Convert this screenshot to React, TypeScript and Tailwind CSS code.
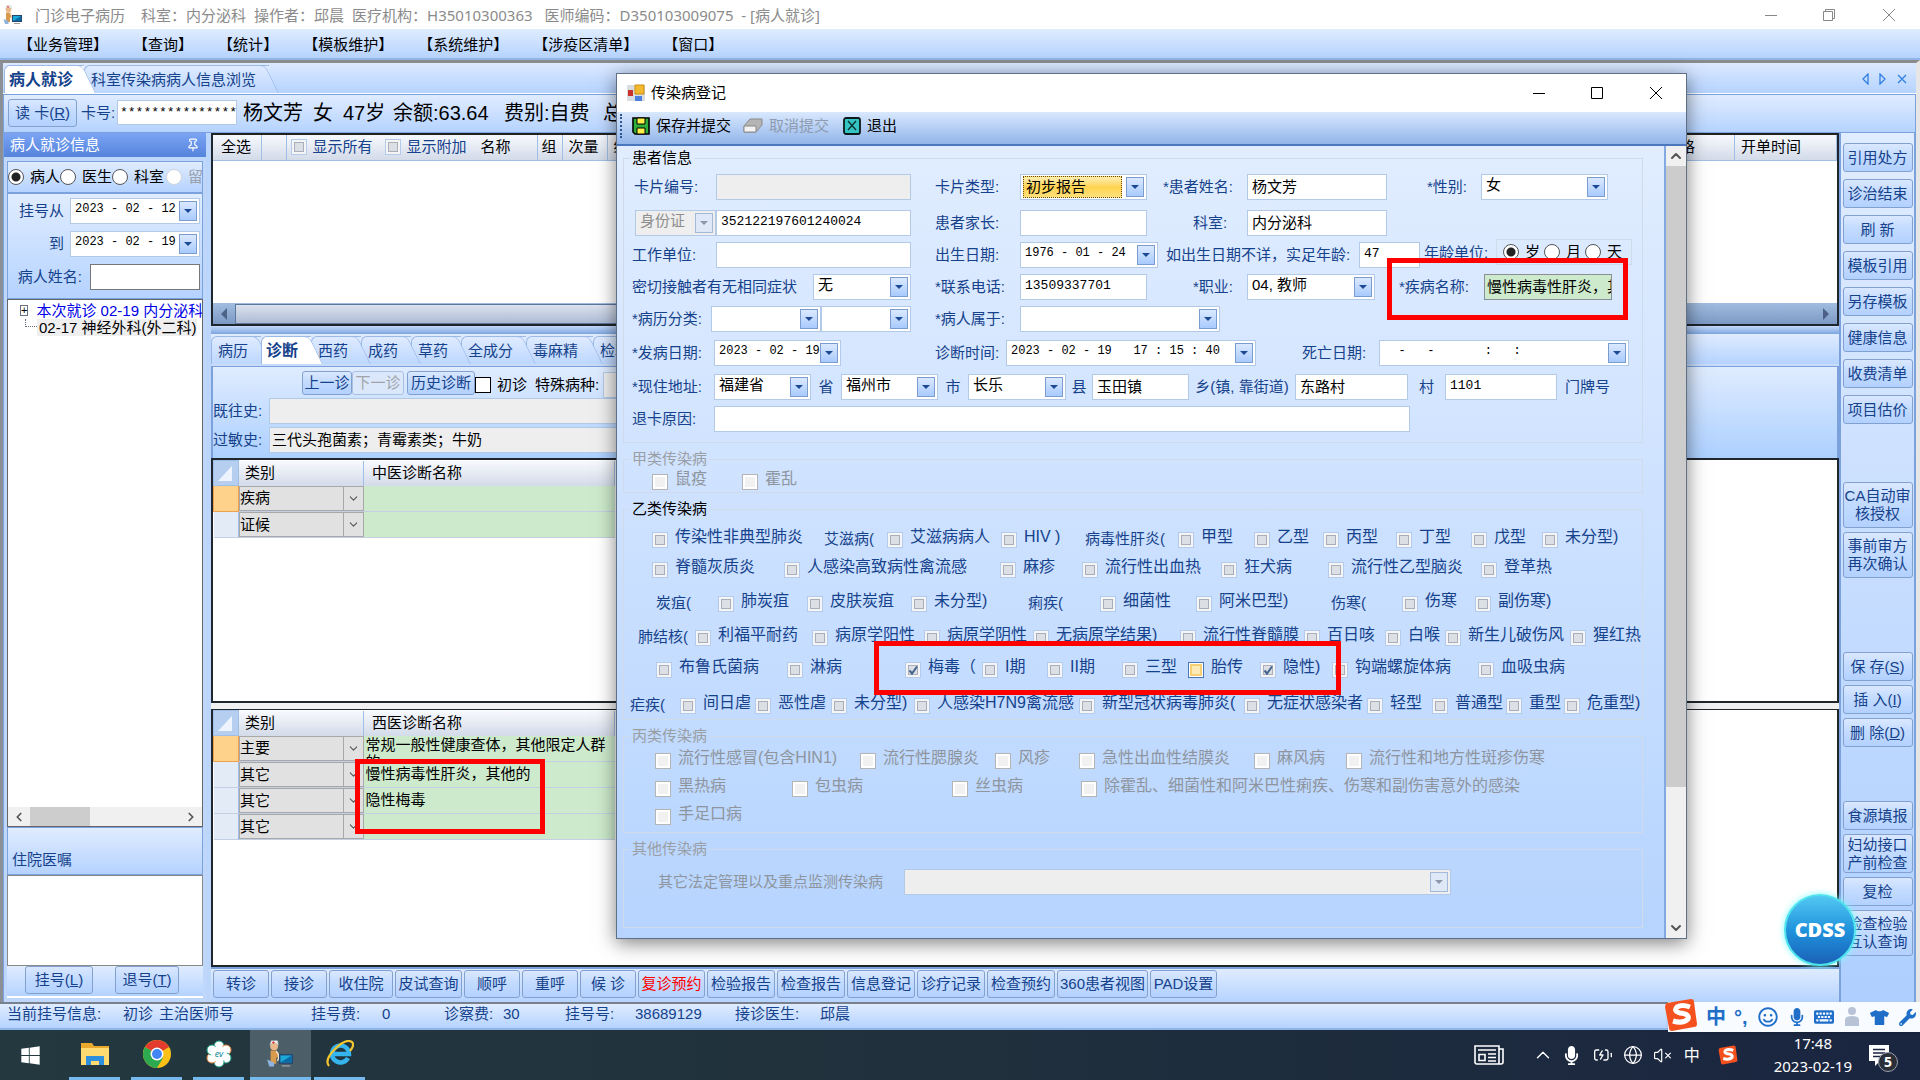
import { ReactNode, useState } from "react";
import { clsx } from "clsx";
import { FaKeyboard, FaMicrophone, FaRegSmile, FaTshirt, FaWindows, FaWrench } from "react-icons/fa";
import { BatteryCharging, ChevronDown, ChevronLeft, ChevronRight, ChevronUp, Globe, Pin, VolumeX } from "lucide-react";

const menus = ["业务管理", "查询", "统计", "模板维护", "系统维护", "涉疫区清单", "窗口"];

const visitTabs = [
  { name: "病历", width: "w-[50px]" },
  { name: "诊断", width: "w-[50px]" },
  { name: "西药", width: "w-[50px]" },
  { name: "成药", width: "w-[50px]" },
  { name: "草药", width: "w-[50px]" },
  { name: "全成分", width: "w-[65px]" },
  { name: "毒麻精", width: "w-[67px]" },
  { name: "检验", width: "w-[50px]" },
];

const bottomActions = [
  { name: "转诊", width: "w-14" },
  { name: "接诊", width: "w-14" },
  { name: "收住院", width: "w-16" },
  { name: "皮试查询", width: "w-[67px]" },
  { name: "顺呼", width: "w-14" },
  { name: "重呼", width: "w-14" },
  { name: "候 诊", width: "w-14" },
  { name: "复诊预约", width: "w-[67px]", red: true },
  { name: "检验报告", width: "w-[68px]" },
  { name: "检查报告", width: "w-[68px]" },
  { name: "信息登记", width: "w-[68px]" },
  { name: "诊疗记录", width: "w-[68px]" },
  { name: "检查预约", width: "w-[68px]" },
  { name: "360患者视图", width: "w-[91px]" },
  { name: "PAD设置", width: "w-[67px]" },
];

type Disease = { name: string; width: string; group?: boolean; checked?: boolean; focus?: boolean };

const classB: { row: string; items: Disease[] }[] = [
  {
    row: "pl-7",
    items: [
      { name: "传染性非典型肺炎", width: "w-[172px]" },
      { name: "艾滋病(", width: "w-[63px]", group: true },
      { name: "艾滋病病人", width: "w-[114px]" },
      { name: "HIV )", width: "w-[84px]" },
      { name: "病毒性肝炎(", width: "w-[93px]", group: true },
      { name: "甲型", width: "w-[76px]" },
      { name: "乙型", width: "w-[69px]" },
      { name: "丙型", width: "w-[73px]" },
      { name: "丁型", width: "w-[75px]" },
      { name: "戊型", width: "w-[71px]" },
      { name: "未分型)", width: "w-20" },
    ],
  },
  {
    row: "pl-7 mt-2.5",
    items: [
      { name: "脊髓灰质炎", width: "w-[132px]" },
      { name: "人感染高致病性禽流感", width: "w-[216px]" },
      { name: "麻疹", width: "w-[82px]" },
      { name: "流行性出血热", width: "w-[139px]" },
      { name: "狂犬病", width: "w-[107px]" },
      { name: "流行性乙型脑炎", width: "w-[153px]" },
      { name: "登革热", width: "w-20" },
    ],
  },
  {
    row: "pl-8 mt-3.5",
    items: [
      { name: "炭疽(", width: "w-[62px]", group: true },
      { name: "肺炭疽", width: "w-[89px]" },
      { name: "皮肤炭疽", width: "w-[104px]" },
      { name: "未分型)", width: "w-[117px]" },
      { name: "痢疾(", width: "w-[72px]", group: true },
      { name: "细菌性", width: "w-[96px]" },
      { name: "阿米巴型)", width: "w-[135px]" },
      { name: "伤寒(", width: "w-[71px]", group: true },
      { name: "伤寒", width: "w-[73px]" },
      { name: "副伤寒)", width: "w-20" },
    ],
  },
  {
    row: "pl-3.5 mt-3.5",
    items: [
      { name: "肺结核(", width: "w-[57px]", group: true },
      { name: "利福平耐药", width: "w-[117px]" },
      { name: "病原学阳性", width: "w-[112px]" },
      { name: "病原学阴性", width: "w-[109px]" },
      { name: "无病原学结果)", width: "w-[147px]" },
      { name: "流行性脊髓膜", width: "w-[124px]" },
      { name: "百日咳", width: "w-[81px]" },
      { name: "白喉", width: "w-[60px]" },
      { name: "新生儿破伤风", width: "w-[125px]" },
      { name: "猩红热", width: "w-[72px]" },
    ],
  },
  {
    row: "pl-8 mt-3",
    items: [
      { name: "布鲁氏菌病", width: "w-[131px]" },
      { name: "淋病", width: "w-[118px]" },
      { name: "梅毒（", width: "w-[77px]", checked: true },
      { name: "I期", width: "w-[65px]" },
      { name: "II期", width: "w-[75px]" },
      { name: "三型", width: "w-[66px]" },
      { name: "胎传", width: "w-[72px]", focus: true },
      { name: "隐性)", width: "w-[72px]", checked: true },
      { name: "钩端螺旋体病", width: "w-[146px]" },
      { name: "血吸虫病", width: "w-24" },
    ],
  },
  {
    row: "pl-1.5 mt-4",
    items: [
      { name: "疟疾(", width: "w-[50px]", group: true },
      { name: "间日虐", width: "w-[75px]" },
      { name: "恶性虐", width: "w-[76px]" },
      { name: "未分型)", width: "w-[83px]" },
      { name: "人感染H7N9禽流感", width: "w-[165px]" },
      { name: "新型冠状病毒肺炎(", width: "w-[165px]" },
      { name: "无症状感染者", width: "w-[123px]" },
      { name: "轻型", width: "w-[65px]" },
      { name: "普通型", width: "w-[74px]" },
      { name: "重型", width: "w-[58px]" },
      { name: "危重型)", width: "w-[78px]" },
    ],
  },
];

const classC: Disease[][] = [
  [
    { name: "流行性感冒(包含HIN1)", width: "w-[205px]" },
    { name: "流行性腮腺炎", width: "w-[135px]" },
    { name: "风疹", width: "w-[84px]" },
    { name: "急性出血性结膜炎", width: "w-[175px]" },
    { name: "麻风病", width: "w-[92px]" },
    { name: "流行性和地方性斑疹伤寒", width: "w-[210px]" },
  ],
  [
    { name: "黑热病", width: "w-[137px]" },
    { name: "包虫病", width: "w-40" },
    { name: "丝虫病", width: "w-[129px]" },
    { name: "除霍乱、细菌性和阿米巴性痢疾、伤寒和副伤害意外的感染", width: "w-[460px]" },
  ],
  [{ name: "手足口病", width: "w-24" }],
];

function Triangle({ muted }: { muted?: boolean }) {
  return (
    <svg width="8" height="4" viewBox="0 0 8 4">
      <path d="M0 0h8L4 4z" fill={muted ? "#8b97aa" : "#1c4a94"} />
    </svg>
  );
}

function DropMark({ muted }: { muted?: boolean }) {
  return (
    <span
      className={clsx(
        "pointer-events-none absolute top-[2px] right-[2px] flex h-5 w-[18px] items-center justify-center border",
        muted ? "border-[#a3b9da] bg-[#dfe8f6]" : "border-[#7a9cce] bg-linear-to-b from-[#dbe9ff] to-[#a9caff]"
      )}
    >
      <Triangle muted={muted} />
    </span>
  );
}

interface FieldProps {
  label: string;
  width: string;
  value?: string;
  disabled?: boolean;
  highlight?: boolean;
}

function Combo({ label, width, value = "", disabled, highlight }: FieldProps) {
  return (
    <span
      className={clsx(
        "relative flex h-[26px] shrink-0 border border-[#b3c9e8]",
        width,
        disabled ? "bg-[#eeeeee]" : "bg-white",
        highlight && "py-px pr-6 pl-0.5"
      )}
    >
      <select
        aria-label={label}
        disabled={disabled}
        defaultValue={value}
        className={clsx(
          "w-full appearance-none text-[15px] leading-5 outline-none",
          disabled ? "text-[#8d8d8d]" : "text-black",
          highlight
            ? "border border-dotted border-[#6b4a00] bg-linear-to-b from-[#ffefb0] via-[#ffd34e] to-[#ffe07a] pl-0.5"
            : "bg-transparent pb-1 pl-1"
        )}
      >
        <option>{value}</option>
      </select>
      <DropMark muted={disabled} />
    </span>
  );
}

function DateBox({ label, width, value = "" }: FieldProps) {
  return (
    <span className={clsx("relative flex h-[26px] shrink-0 border border-[#b3c9e8] bg-white", width)}>
      <input
        aria-label={label}
        defaultValue={value}
        className="w-full bg-transparent pb-1 pl-1 font-['Liberation_Mono',monospace] text-xs text-black outline-none"
      />
      <DropMark />
    </span>
  );
}

function TextBox({ label, width, value = "", disabled, highlight }: FieldProps) {
  const numeric = /^[\d*]+$/.test(value);
  return (
    <input
      aria-label={label}
      defaultValue={value}
      disabled={disabled}
      className={clsx(
        "h-[26px] shrink-0 border pb-1 text-black outline-none",
        width,
        numeric ? "font-['Liberation_Mono',monospace] text-[13px]" : "text-[15px]",
        disabled && "border-[#b3c9e8] bg-[#eeeeee]",
        highlight ? "border-[#8a8f96] bg-[#cdeacc] pl-0.5" : "pl-1",
        !disabled && !highlight && "border-[#b3c9e8] bg-white"
      )}
    />
  );
}

function Caption({ children, width }: { children: ReactNode; width: string }) {
  return <span className={clsx("shrink-0 whitespace-nowrap", width)}>{children}</span>;
}

function Radio({ name, label, checked, disabled }: { name: string; label: string; checked?: boolean; disabled?: boolean }) {
  return (
    <label className={clsx("flex shrink-0 items-center gap-1.5 whitespace-nowrap", disabled ? "text-gray-400" : "text-black")}>
      <input
        type="radio"
        name={name}
        defaultChecked={checked}
        disabled={disabled}
        className="size-4 appearance-none rounded-full border border-[#555] bg-white checked:bg-[radial-gradient(circle,#222_0_4px,#fff_5px)] disabled:border-gray-300"
      />
      {label}
    </label>
  );
}

function CheckItem({ item, disabled }: { item: Disease; disabled?: boolean }) {
  if (item.group) {
    return <span className={clsx("mt-0.5 shrink-0 text-[15px] leading-4 whitespace-nowrap", item.width)}>{item.name}</span>;
  }
  return (
    <label className={clsx("flex shrink-0 items-start gap-[7px] text-base leading-4 whitespace-nowrap", item.width)}>
      <span className="relative mt-[3px] size-4 shrink-0">
        <input
          type="checkbox"
          defaultChecked={item.checked}
          disabled={disabled}
          className={clsx(
            "peer block size-4 appearance-none border",
            disabled && "border-[#b5b5b5] bg-[#f1f1f1] shadow-[inset_0_0_0_2px_#fff]",
            !disabled && item.focus && "border-[#4a75b8] bg-[#fbe9b8] shadow-[inset_0_0_0_1px_#fff,inset_0_0_0_3px_#f6cf74]",
            !disabled && !item.focus && "border-[#b4cbec] bg-[#dcdfe4] shadow-[inset_0_0_0_2px_#f5f5f5,inset_0_0_0_3px_#a9afba]"
          )}
        />
        <svg viewBox="0 0 16 16" className="pointer-events-none absolute inset-0 hidden size-4 peer-checked:block">
          <path d="M4.5 8.5l2.5 3L12 4.5" fill="none" stroke="#44638f" strokeWidth="2" />
        </svg>
      </span>
      {item.name}
    </label>
  );
}

function Group({ title, muted, children }: { title: string; muted?: boolean; children: ReactNode }) {
  return (
    <fieldset className={clsx("border border-[#cfdaea]", muted ? "text-[#8e959e]" : "text-[#15428b]")}>
      <legend className={clsx("ml-1.5 px-0.5 leading-4", muted ? "text-[#9a9fa6]" : "text-black")}>{title}</legend>
      {children}
    </fieldset>
  );
}

function BlueButton({ children, className, disabled }: { children: ReactNode; className?: string; disabled?: boolean }) {
  return (
    <button
      disabled={disabled}
      className={clsx(
        "shrink-0 rounded-[3px] border text-[15px] whitespace-nowrap",
        disabled
          ? "border-[#a9c0e2] bg-[#dbe8fb] text-[#a0a4aa]"
          : "border-[#83a1cf] bg-linear-to-b from-[#dae8ff] via-[#c3dbff] via-45% to-[#b3d1ff]",
        className
      )}
    >
      {children}
    </button>
  );
}

function SlantTab({ name, active, width, onClick }: { name: string; active?: boolean; width: string; onClick?: () => void }) {
  return (
    <button
      role="tab"
      aria-selected={active}
      onClick={onClick}
      className={clsx(
        "relative h-full shrink-0 rounded-tl-md border-t border-l border-[#9bb9e6] text-left whitespace-nowrap",
        "after:absolute after:-top-px after:-right-[2px] after:bottom-0 after:w-4 after:origin-bottom-right after:skew-x-[26deg] after:rounded-tr-md after:border-t after:border-r after:border-[#9bb9e6]",
        active
          ? "z-10 bg-white pl-1 text-base font-bold after:z-0 after:translate-x-2.5 after:bg-white"
          : "bg-linear-to-b from-[#dfebff] to-[#bdd7ff] pl-1.5 text-[15px] after:z-10 after:translate-x-2 after:bg-linear-to-b after:from-[#dfebff] after:to-[#bdd7ff]",
        width
      )}
    >
      <span className="relative z-20">{name}</span>
    </button>
  );
}

function DiagnosisTable({ title, rows }: { title: string; rows: { kind: string; text: string }[] }) {
  return (
    <table className="table-fixed border-collapse text-black">
      <thead>
        <tr className="h-[25px] bg-linear-to-b from-[#f7f9fd] to-[#d3dbe9] text-left">
          <th className="w-[25px] border border-[#9fbfe6] bg-[#b6cff1]">
            <svg viewBox="0 0 22 22" className="size-[22px]">
              <path d="M18 4v15H4z" fill="#eef4fd" />
            </svg>
          </th>
          <th className="w-[125px] border-r border-[#9fbfe6] pl-1.5 font-normal">类别</th>
          <th className="w-[251px] border-r border-[#9fbfe6] pl-2 font-normal">{title}</th>
        </tr>
      </thead>
      <tbody>
        {rows.map((row, i) => (
          <tr key={i} className="h-[26px] border-b border-[#c3d0e2]">
            <td className={i === 0 ? "border border-[#f0a04b] bg-[#ffd28b]" : "border-r border-[#9fbfe6] bg-[#e3ebf7]"} />
            <td className="p-0">
              <span className="relative flex h-[25px] border border-[#a8a8a8] bg-[#e1e1e1]">
                <select aria-label="类别" defaultValue={row.kind} className="w-full appearance-none bg-transparent outline-none">
                  <option>{row.kind}</option>
                </select>
                <span className="pointer-events-none absolute top-0 right-0 flex h-full w-5 items-center justify-center border-l border-[#a8a8a8]">
                  <ChevronDown size={13} className="text-[#555]" />
                </span>
              </span>
            </td>
            <td className="bg-[#cdeacc] p-0 pl-0.5">
              <div className={clsx("h-[25px] overflow-hidden", i === 0 ? "leading-[17px]" : "leading-6")}>{row.text}</div>
            </td>
          </tr>
        ))}
      </tbody>
    </table>
  );
}

function AppIcon() {
  return (
    <svg viewBox="0 0 20 20" className="size-full">
      <circle cx="6.5" cy="4.500" r="2.800" fill="#e9b98d" />
      <path d="M3.500 3.500q3-3 6 0L9 .5H4.500z" fill="#f6f6f6" stroke="#b9b9b9" strokeWidth=".4" />
      <path d="M6 .8v2M5 1.800h2" stroke="#d33" strokeWidth=".6" />
      <path d="M4 7.500h4.500l1.500 4-2 1.500v4H4z" fill="#d99a4e" />
      <path d="M1.500 14l5 2v3H3z" fill="#8fb3dd" />
      <path d="M8 8q3 3 1 7" fill="none" stroke="#f4e3cf" />
      <rect x="10" y="10" width="10" height="7" fill="#23476e" />
      <path d="M11 11h8v5h-8z" fill="#1ba9d8" />
      <path d="M11 16l8-5v5z" fill="#0b6aa6" />
      <path d="M12 18h6v1h-6z" fill="#9a9a9a" />
    </svg>
  );
}

function SogouMark({ className }: { className?: string }) {
  return (
    <svg viewBox="0 0 34 34" className={className}>
      <path d="M3 5L27 1q3 0 3 3l3 22q0 3-3 3L8 33q-3 0-3-3L1 9q0-3 2-4z" fill="#f4511e" />
      <path d="M26 9q-8-3-13 0-4 4 3 6 10 1 8 6-5 5-15 2" fill="none" stroke="#fff" strokeWidth="5" />
    </svg>
  );
}

function Sidebar() {
  return (
    <aside className="mr-[5px] flex w-[203px] shrink-0 flex-col border-l border-[#7ba2dc] bg-[#bfd7fb]">
      <header className="flex h-6 items-center justify-between bg-linear-to-b from-[#7ba4f4] to-[#5584dc] px-1.5 text-white">
        病人就诊信息
        <Pin size={14} />
      </header>
      <div className="mx-[3px] mt-1 flex h-8 items-center overflow-hidden border border-[#7ba2dc] bg-linear-to-b from-[#e0ecff] to-[#b5d3ff]">
        <Radio name="scope" label="病人" checked />
        <Radio name="scope" label="医生" />
        <Radio name="scope" label="科室" />
        <span className="ml-0.5">
          <Radio name="scope" label="留观" disabled />
        </span>
      </div>
      <div className="mx-[3px] flex h-[106px] flex-col justify-center gap-[7px] border border-[#7ba2dc] bg-linear-to-b from-[#e0ecff] to-[#b5d3ff] pr-0.5 pb-1">
        <div className="flex items-center justify-end gap-1.5">
          挂号从
          <DateBox label="挂号从" width="w-[130px]" value="2023 - 02 - 12" />
        </div>
        <div className="flex items-center justify-end gap-1.5">
          到
          <DateBox label="到" width="w-[130px]" value="2023 - 02 - 19" />
        </div>
        <label className="flex items-center justify-end gap-2">
          病人姓名:
          <input className="h-[26px] w-[110px] border border-[#777] bg-white" />
        </label>
      </div>
      <div className="mx-[3px] flex flex-1 flex-col border border-[#666] bg-white">
        <ul className="overflow-hidden pt-0.5 leading-[17px] whitespace-nowrap text-black">
          <li className="flex items-center gap-1 pl-3 text-[#0000e6]">
            <span className="flex size-[11px] items-center justify-center border border-gray-500 text-[11px] leading-none text-black">+</span>
            <span className="w-1 border-t border-dotted border-gray-500" />
            本次就诊 02-19 内分泌科
          </li>
          <li className="flex pl-[17px]">
            <span className="h-2 w-3 border-b border-l border-dotted border-gray-500" />
            <span className="bg-[#efefef] pl-0.5">02-17 神经外科(外二科)</span>
          </li>
        </ul>
        <div className="mt-auto flex h-[19px] items-center justify-between bg-[#f0f0f0] px-1 text-[#555]">
          <ChevronLeft size={14} strokeWidth={3} />
          <span className="mr-auto ml-1 h-[19px] w-[60px] bg-[#cdcdcd]" />
          <ChevronRight size={14} strokeWidth={3} />
        </div>
      </div>
      <h2 className="mx-[3px] flex h-12 items-end border border-[#7ba2dc] bg-linear-to-b from-[#e0ecff] to-[#b5d3ff] pb-1 pl-1">住院医嘱</h2>
      <div className="mx-[3px] h-[91px] border border-[#888] bg-white" />
      <div className="mx-[3px] mb-1 flex h-8 items-center gap-[22px] border-b-2 border-white bg-linear-to-b from-[#e0ecff] to-[#b5d3ff] pb-0.5 pl-[18px]">
        <BlueButton className="h-7 w-[68px]">
          挂号(<u>L</u>)
        </BlueButton>
        <BlueButton className="h-7 w-[64px]">
          退号(<u>T</u>)
        </BlueButton>
      </div>
    </aside>
  );
}

function OrderGrid() {
  return (
    <section className="flex h-[193px] shrink-0 flex-col border-2 border-[#20262e] border-t-[#222] bg-white">
      <table className="w-full table-fixed border-collapse text-black">
        <thead>
          <tr className="h-[25px] bg-linear-to-b from-[#f7f9fd] to-[#d3dbe9] text-left [&>th]:border-r [&>th]:border-b [&>th]:border-[#9fbfe6] [&>th]:font-normal">
            <th className="w-12 pl-2">全选</th>
            <th className="w-[25px]" />
            <th className="w-[251px]">
              <span className="flex items-center pl-1 whitespace-nowrap">
                <label className="flex w-[94px] items-center gap-1.5 text-[#15428b]">
                  <input type="checkbox" className="size-4 appearance-none border border-[#b4cbec] bg-[#dcdfe4] shadow-[inset_0_0_0_2px_#f5f5f5,inset_0_0_0_3px_#a9afba]" />
                  显示所有
                </label>
                <label className="flex w-24 items-center gap-1.5 text-[#15428b]">
                  <input type="checkbox" className="size-4 appearance-none border border-[#b4cbec] bg-[#dcdfe4] shadow-[inset_0_0_0_2px_#f5f5f5,inset_0_0_0_3px_#a9afba]" />
                  显示附加
                </label>
                名称
              </span>
            </th>
            <th className="w-[25px] pl-1">组</th>
            <th className="w-[45px] pl-1.5">次量</th>
            <th className="pl-1.5">给药途径</th>
            <th className="w-[78px] pl-2">规格</th>
            <th className="w-[102px] pl-1.5">开单时间</th>
          </tr>
        </thead>
      </table>
      <div className="mt-auto flex h-[21px] items-center bg-linear-to-b from-[#a2bde0] to-[#7c99c4]">
        <svg width="22" height="12" viewBox="0 0 22 12">
          <path d="M14 0v12L8 6z" fill="#4d6488" />
        </svg>
        <span className="h-5 w-[900px] border border-[#5d789f] bg-linear-to-b from-[#dbe2ee] to-[#adbbd4]" />
        <svg width="22" height="12" viewBox="0 0 22 12" className="ml-auto">
          <path d="M8 0v12l6-6z" fill="#4d5f86" />
        </svg>
      </div>
    </section>
  );
}

function ActionRail() {
  const top = ["引用处方", "诊治结束", "刷 新", "模板引用", "另存模板", "健康信息", "收费清单", "项目估价"];
  return (
    <nav className="flex w-[77px] shrink-0 flex-col items-center border-x-2 border-[#7ba2dc] bg-linear-to-b from-[#e0ecff] to-[#aecfff] pt-2.5 leading-[18px]">
      <div className="flex flex-col gap-[7px]">
        {top.map((name) => (
          <BlueButton key={name} className="h-[29px] w-[70px]">
            {name}
          </BlueButton>
        ))}
      </div>
      <BlueButton className="mt-[58px] h-[46px] w-[70px]">
        CA自动审
        <br />
        核授权
      </BlueButton>
      <BlueButton className="mt-1 h-[46px] w-[70px]">
        事前审方
        <br />
        再次确认
      </BlueButton>
      <BlueButton className="mt-[74px] h-[29px] w-[70px]">
        保 存(<u>S</u>)
      </BlueButton>
      <BlueButton className="mt-1 h-[29px] w-[70px]">
        插 入(<u>I</u>)
      </BlueButton>
      <BlueButton className="mt-1 h-[29px] w-[70px]">
        删 除(<u>D</u>)
      </BlueButton>
      <BlueButton className="mt-[54px] h-[29px] w-[70px]">食源填报</BlueButton>
      <BlueButton className="mt-1 h-[39px] w-[70px]">
        妇幼接口
        <br />
        产前检查
      </BlueButton>
      <BlueButton className="mt-1 h-[29px] w-[70px]">复检</BlueButton>
      <BlueButton className="mt-1 h-[46px] w-[70px]">
        检查检验
        <br />
        互认查询
      </BlueButton>
    </nav>
  );
}

function PatientForm() {
  return (
    <div className="flex flex-col gap-1.5 pt-2 pb-2.5 pl-2 [&>div]:flex [&>div]:h-[26px] [&>div]:items-center">
      <div className="mb-1">
        <Caption width="w-[84px] pl-0.5">卡片编号:</Caption>
        <TextBox label="卡片编号" width="w-[195px]" disabled />
        <Caption width="w-[109px] pl-6">卡片类型:</Caption>
        <Combo label="卡片类型" width="w-[127px]" value="初步报告" highlight />
        <Caption width="w-[100px] pl-4">*患者姓名:</Caption>
        <TextBox label="患者姓名" width="w-[140px]" value="杨文芳" />
        <Caption width="w-[94px] pl-10">*性别:</Caption>
        <Combo label="性别" width="w-[127px]" value="女" />
      </div>
      <div>
        <span className="w-[3px]" />
        <Combo label="证件类型" width="w-[81px]" value="身份证" disabled />
        <TextBox label="证件号码" width="w-[195px]" value="352122197601240024" />
        <Caption width="w-[109px] pl-6">患者家长:</Caption>
        <TextBox label="患者家长" width="w-[127px]" />
        <Caption width="w-[100px] pl-[46px]">科室:</Caption>
        <TextBox label="科室" width="w-[140px]" value="内分泌科" />
      </div>
      <div>
        <Caption width="w-[84px]">工作单位:</Caption>
        <TextBox label="工作单位" width="w-[195px]" />
        <Caption width="w-[109px] pl-6">出生日期:</Caption>
        <DateBox label="出生日期" width="w-[138px]" value="1976 - 01 - 24" />
        <Caption width="w-[201px] pl-2">如出生日期不详，实足年龄:</Caption>
        <TextBox label="实足年龄" width="w-[61px]" value="47" />
        <Caption width="w-[76px] pl-1 pb-1">年龄单位:</Caption>
        <span className="mb-1.5 flex h-[26px] w-[136px] items-center gap-1 overflow-hidden border border-[#cfdaea] pl-1.5">
          <Radio name="unit" label="岁" checked />
          <Radio name="unit" label="月" />
          <Radio name="unit" label="天" />
        </span>
      </div>
      <div>
        <Caption width="w-[181px]">密切接触者有无相同症状</Caption>
        <Combo label="密切接触者有无相同症状" width="w-[98px]" value="无" />
        <Caption width="w-[109px] pl-6">*联系电话:</Caption>
        <TextBox label="联系电话" width="w-[127px]" value="13509337701" />
        <Caption width="w-[100px] pl-[46px]">*职业:</Caption>
        <Combo label="职业" width="w-[128px]" value="04, 教师" />
        <Caption width="w-[109px] pl-6">*疾病名称:</Caption>
        <TextBox label="疾病名称" width="w-[128px]" value="慢性病毒性肝炎，其他的" highlight />
      </div>
      <div>
        <Caption width="w-[79px]">*病历分类:</Caption>
        <Combo label="病历分类" width="w-[110px]" />
        <Combo label="病历分类明细" width="w-[90px]" />
        <Caption width="w-[109px] pl-6">*病人属于:</Caption>
        <Combo label="病人属于" width="w-[200px]" />
      </div>
      <div className="mt-0.5">
        <Caption width="w-[82px]">*发病日期:</Caption>
        <DateBox label="发病日期" width="w-[127px]" value="2023 - 02 - 19" />
        <Caption width="w-[165px] pl-[94px]">诊断时间:</Caption>
        <DateBox label="诊断时间" width="w-[250px]" value="2023 - 02 - 19   17 : 15 : 40" />
        <Caption width="w-[123px] pl-[46px]">死亡日期:</Caption>
        <DateBox label="死亡日期" width="w-[250px]" value="  -   -       :   :" />
      </div>
      <div className="mt-0.5">
        <Caption width="w-[82px]">*现住地址:</Caption>
        <Combo label="省" width="w-[97px]" value="福建省" />
        <Caption width="w-[30px] text-center">省</Caption>
        <Combo label="市" width="w-[97px]" value="福州市" />
        <Caption width="w-[30px] text-center">市</Caption>
        <Combo label="县" width="w-[98px]" value="长乐" />
        <Caption width="w-[26px] text-center">县</Caption>
        <TextBox label="乡镇" width="w-[97px]" value="玉田镇" />
        <Caption width="w-[106px] text-center">乡(镇, 靠街道)</Caption>
        <TextBox label="村" width="w-[113px]" value="东路村" />
        <Caption width="w-[37px] text-center">村</Caption>
        <TextBox label="门牌号" width="w-[112px]" value="1101" />
        <Caption width="w-[60px] pl-2">门牌号</Caption>
      </div>
      <div>
        <Caption width="w-[82px]">退卡原因:</Caption>
        <TextBox label="退卡原因" width="w-[696px]" />
      </div>
    </div>
  );
}

function ReportDialog({ onClose }: { onClose: () => void }) {
  return (
    <div
      role="dialog"
      aria-label="传染病登记"
      className="absolute top-[73px] left-[616px] z-30 flex w-[1071px] flex-col border border-[#5f7086] bg-white shadow-[0_4px_18px_rgba(0,0,0,0.5)]"
    >
      <header className="flex h-[38px] items-center pl-2.5 text-black">
        <svg viewBox="0 0 18 18" className="mr-1.5 size-[18px]">
          <path d="M0 1h18v16H0z" fill="#d9dce0" />
          <path d="M1 6h5v6H1z" fill="#c8322b" />
          <path d="M8 1h9v9H8z" fill="#f4b92e" stroke="#c98d0c" />
          <path d="M8 12h7v5H8z" fill="#4b7fe0" />
        </svg>
        传染病登记
        <span className="ml-auto flex items-center">
          <button aria-label="最小化" className="flex w-[58px] justify-center">
            <svg width="12" height="12"><path d="M0 6.5h12" stroke="#000" /></svg>
          </button>
          <button aria-label="最大化" className="flex w-[58px] justify-center">
            <svg width="12" height="12"><path d="M.5 .5h11v11H.5z" fill="none" stroke="#000" /></svg>
          </button>
          <button aria-label="关闭" onClick={onClose} className="flex w-[60px] justify-center">
            <svg width="12" height="12"><path d="M0 0l12 12M12 0L0 12" stroke="#000" /></svg>
          </button>
        </span>
      </header>
      <div className="flex h-[34px] items-center border-b-2 border-[#4a78bd] bg-linear-to-b from-[#d9e8fd] to-[#92b5ea] pb-1 pl-[3px] text-black">
        <span className="h-6 border-l-2 border-dotted border-[#2d5596]" />
        <button className="ml-2.5 flex items-center gap-1.5">
          <svg viewBox="0 0 18 18" className="size-[18px]">
            <path d="M1 1h16v16H3l-2-2z" fill="#2fae3c" stroke="#000" strokeWidth="1.6" />
            <path d="M5 1h8v6H5zM5 11h8v6H5z" fill="#fff04a" stroke="#000" />
          </svg>
          保存并提交
        </button>
        <button disabled className="ml-3 flex items-center gap-1.5 text-[#8e9bb0]">
          <svg viewBox="0 0 20 18" className="h-[18px] w-5">
            <path d="M1 9l6-7h12v6l-6 7H1z" fill="#b4b4b4" stroke="#8a8a8a" />
            <path d="M1 9h12v6H1z" fill="#f3f3f3" stroke="#8a8a8a" />
          </svg>
          取消提交
        </button>
        <button onClick={onClose} className="ml-3.5 flex items-center gap-1.5">
          <svg viewBox="0 0 18 18" className="size-[18px]">
            <rect x="1" y="1" width="16" height="16" rx="2" fill="#35c4c4" stroke="#0b1a1a" strokeWidth="1.8" />
            <path d="M5 4l8 9M13 4l-8 9" stroke="#08302f" strokeWidth="1.3" />
          </svg>
          退出
        </button>
      </div>
      <div className="flex">
        <div className="flex flex-1 flex-col gap-2 border-r-2 border-[#83a9e2] bg-linear-to-b from-[#e1edff] to-[#b6d4ff] pt-1 pr-[21px] pb-2.5 pl-1.5">
          <Group title="患者信息">
            <PatientForm />
          </Group>
          <Group title="甲类传染病" muted>
            <div className="flex pt-1 pb-0.5 pl-7">
              <CheckItem item={{ name: "鼠疫", width: "w-[90px]" }} disabled />
              <CheckItem item={{ name: "霍乱", width: "w-[90px]" }} disabled />
            </div>
          </Group>
          <Group title="乙类传染病">
            <div className="pt-3 pb-1">
              {classB.map(({ row, items }, i) => (
                <div key={i} className={clsx("flex h-5", row)}>
                  {items.map((item) => (
                    <CheckItem key={item.name} item={item} />
                  ))}
                </div>
              ))}
            </div>
          </Group>
          <Group title="丙类传染病" muted>
            <div className="flex flex-col gap-2 pt-1.5 pb-1.5 pl-[31px]">
              {classC.map((items, i) => (
                <div key={i} className="flex h-5">
                  {items.map((item) => (
                    <CheckItem key={item.name} item={item} disabled />
                  ))}
                </div>
              ))}
            </div>
          </Group>
          <Group title="其他传染病" muted>
            <div className="flex items-center pt-3 pb-8 pl-[34px]">
              <Caption width="w-[246px]">其它法定管理以及重点监测传染病</Caption>
              <Combo label="其它法定管理以及重点监测传染病" width="w-[547px]" disabled />
            </div>
          </Group>
        </div>
        <div className="flex w-5 flex-col items-center bg-[#f0f0f0] text-[#555]">
          <ChevronUp size={16} strokeWidth={3} className="my-0.5 shrink-0" />
          <span className="h-[621px] w-full bg-[#cccccc]" />
          <ChevronDown size={16} strokeWidth={3} className="mt-auto mb-0.5 shrink-0" />
        </div>
      </div>
      <span className="pointer-events-none absolute top-[184px] left-[770px] h-[62px] w-[241px] border-[5px] border-[#ff0000]" />
      <span className="pointer-events-none absolute top-[567px] left-[257px] h-[54px] w-[467px] border-[5px] border-[#ff0000]" />
    </div>
  );
}

function InputBar() {
  return (
    <div className="absolute right-0 bottom-12 z-40 flex h-[30px] items-center bg-[#f8fbff] text-[#1f6fc9] shadow">
      <SogouMark className="-mt-1 -ml-1 mr-2 size-[34px]" />
      <span className="w-7 text-xl font-bold">中</span>
      <span className="w-6 text-xl font-bold">°,</span>
      <FaRegSmile size={20} className="mr-2.5" />
      <FaMicrophone size={18} className="mr-2" />
      <FaKeyboard size={20} className="mr-2.5" />
      <svg viewBox="0 0 16 20" className="mr-2.5 h-5 w-4 fill-[#b9c3d8]">
        <circle cx="8" cy="4" r="4" />
        <path d="M1 19v-6q0-4 7-4t7 4v6z" />
      </svg>
      <FaTshirt size={19} className="mr-2.5" />
      <FaWrench size={17} className="mr-1" />
    </div>
  );
}

function Taskbar() {
  return (
    <footer className="flex h-[50px] shrink-0 items-stretch bg-linear-to-r from-[#23383f] via-[#20303c] to-[#1a2540] font-['Noto_Sans','Noto_Sans_CJK_SC',sans-serif] text-white">
      <button aria-label="开始" className="flex w-[66px] items-center justify-center pr-1.5">
        <FaWindows size={21} />
      </button>
      <button aria-label="文件资源管理器" className="mx-[3px] flex w-[51px] items-center justify-center border-b-[3px] border-[#76b9ed]">
        <svg viewBox="0 0 28 24" className="h-6 w-7">
          <path d="M0 1h11l2 3h15v19H0z" fill="#e8a92c" />
          <path d="M0 6h28v17H0z" fill="#ffdb72" />
          <path d="M5 23v-9h18v9h-5v-4h-8v4z" fill="#2e8fdc" />
        </svg>
      </button>
      <button aria-label="Chrome" className="mx-2 flex w-[51px] items-center justify-center border-b-[3px] border-[#76b9ed]">
        <svg viewBox="0 0 28 28" className="size-7">
          <circle cx="14" cy="14" r="14" fill="#fbc116" />
          <path d="M14 14L1.900 7A14 14 0 0 1 26.100 7z" fill="#e33b2e" />
          <path d="M14 14L1.900 7A14 14 0 0 0 14 28l6-10z" fill="#2da94f" />
          <circle cx="14" cy="14" r="6.500" fill="#fff" />
          <circle cx="14" cy="14" r="5" fill="#4285f4" />
        </svg>
      </button>
      <button aria-label="录屏" className="mx-[3px] flex w-[51px] items-center justify-center border-b-[3px] border-[#76b9ed]">
        <svg viewBox="0 0 28 28" className="size-7">
          <g fill="#fff" stroke="#1d9e86">
            <circle cx="14" cy="6" r="5" />
            <circle cx="21" cy="10" r="5" stroke="#e2843b" />
            <circle cx="21" cy="18" r="5" />
            <circle cx="14" cy="22" r="5" />
            <circle cx="7" cy="18" r="5" stroke="#e2843b" />
            <circle cx="7" cy="10" r="5" />
          </g>
          <circle cx="14" cy="14" r="8" fill="#fff" />
          <text x="14" y="17" textAnchor="middle" fontSize="9" fontStyle="italic" fill="#178c9a">ev</text>
        </svg>
      </button>
      <button aria-label="门诊电子病历" className="mx-[3px] flex w-[61px] items-center justify-center border-b-[3px] border-[#76b9ed] bg-[#4c5f68] pr-1">
        <span className="size-7">
          <AppIcon />
        </span>
      </button>
      <button aria-label="Internet Explorer" className="flex w-[51px] items-center justify-center border-b-[3px] border-[#76b9ed]">
        <svg viewBox="0 0 28 28" className="size-7">
          <path d="M22 18a8.500 8.500 0 1 1 1-4H7" fill="none" stroke="#35b4ee" strokeWidth="4.500" />
          <path d="M3 26Q-2 20 9 9T26 2q3 3-2 9" fill="none" stroke="#f5c52d" strokeWidth="2.200" />
        </svg>
      </button>
      <div className="ml-auto flex items-center">
        <svg viewBox="0 0 30 20" className="mr-7 h-5 w-[30px]" fill="none" stroke="#fff" strokeWidth="1.600">
          <path d="M1 1h24v18H3q-2 0-2-2zM25 4h4v13q0 2-2 2h-4" />
          <path d="M4 5h18M14 9h8M14 12.500h8M14 16h8M5 9.500h6v6H5z" />
        </svg>
        <ChevronUp size={22} strokeWidth={1.5} className="mr-2" />
        <FaMicrophone size={19} className="mr-3" />
        <BatteryCharging size={20} strokeWidth={1.6} className="mr-2.5" />
        <Globe size={20} strokeWidth={1.5} className="mr-2.5" />
        <VolumeX size={19} strokeWidth={1.5} className="mr-3" />
        <span className="mr-[18px] text-base">中</span>
        <SogouMark className="mr-9 size-5" />
        <time className="mr-4 text-center text-[15px] leading-[23px]">
          17:48
          <br />
          2023-02-19
        </time>
        <span className="relative mr-[30px]">
          <svg viewBox="0 0 22 22" className="size-[22px]">
            <path d="M1 1h20v16h-9l-5 5v-5H1z" fill="#fff" />
            <path d="M5 5.500h12M5 9h12M5 12.500h8" stroke="#1a2540" strokeWidth="1.500" />
          </svg>
          <span className="absolute top-2 left-2.5 flex size-5 items-center justify-center rounded-full border border-gray-400 bg-[#2b2f38] text-sm font-bold">5</span>
        </span>
      </div>
    </footer>
  );
}

export default function App() {
  const [tab, setTab] = useState("诊断");
  const [dialogOpen, setDialogOpen] = useState(true);

  return (
    <div className="relative flex min-h-screen flex-col overflow-hidden bg-[#bcd5fa] font-['Liberation_Sans','Noto_Sans_CJK_SC',sans-serif] text-[15px] leading-5 text-[#15428b]">
      <header className="flex h-[29px] items-center gap-2 bg-white pl-0.5 font-['Noto_Sans','Noto_Sans_CJK_SC',sans-serif] whitespace-pre text-[#8b8b8b]">
        <span className="mr-[5px] size-5">
          <AppIcon />
        </span>
        <h1 className="mr-2">门诊电子病历</h1>
        <span>科室：内分泌科</span>
        <span>操作者：邱晨</span>
        <span>医疗机构：H35010300363</span>
        <span className="ml-1">医师编码：D350103009075  - [病人就诊]</span>
        <span className="ml-auto flex items-center">
          <button aria-label="最小化" className="flex w-[58px] justify-center">
            <svg width="12" height="12"><path d="M0 6.500h12" stroke="#888" /></svg>
          </button>
          <button aria-label="还原" className="flex w-[58px] justify-center">
            <svg width="12" height="12"><path d="M.5 2.500h9v9h-9zM2.500 2.500v-2h9v9h-2" fill="none" stroke="#888" /></svg>
          </button>
          <button aria-label="关闭" className="flex w-[62px] justify-center">
            <svg width="12" height="12"><path d="M0 0l12 12M12 0L0 12" stroke="#888" /></svg>
          </button>
        </span>
      </header>
      <nav className="flex h-[31px] items-center gap-[25px] border-b-2 border-[#8fb4e8] bg-linear-to-b from-[#e0ecff] to-[#b5d3ff] pt-0.5 pl-[18px] text-black">
        {menus.map((name) => (
          <button key={name}>【{name}】</button>
        ))}
      </nav>

      <div className="flex flex-1 flex-col border-t-[3px] border-r-4 border-l-[3px] border-t-[#8b8b8b] border-r-[#e6e6e6] border-l-[#8b8f96]">
        <div role="tablist" className="flex h-[31px] items-end border-b border-white bg-linear-to-b from-[#dce9ff] to-[#b5d3ff] pt-0.5 pl-px">
          <SlantTab name="病人就诊" active width="w-[80px]" />
          <SlantTab name="科室传染病病人信息浏览" width="w-[185px]" />
          <span className="ml-auto flex items-center gap-3 self-center pr-2">
            <svg width="46" height="12" viewBox="0 0 46 12" fill="none" stroke="#2e7fe0" strokeWidth="1.300">
              <path d="M6 1v10L1 6zM18 1v10l5-5zM36 2l8 8M44 2l-8 8" />
            </svg>
          </span>
        </div>
        <div className="flex h-[39px] items-center border border-[#7ba2dc] bg-linear-to-b from-[#e0ecff] to-[#b5d3ff] pb-0.5 pl-1">
          <BlueButton className="h-7 w-[69px]">
            读 卡(<u>R</u>)
          </BlueButton>
          <label className="ml-1 flex items-center">
            <span className="w-9">卡号:</span>
            <input
              defaultValue="****************"
              className="h-[25px] w-[120px] border border-[#b3c9e8] bg-white pl-0.5 font-['Liberation_Mono',monospace] text-[13px] text-black"
            />
          </label>
          <p className="ml-1.5 flex gap-2.5 text-xl whitespace-nowrap text-black">
            <span>杨文芳</span>
            <span>女</span>
            <span className="w-10">47岁</span>
            <span className="w-[101px]">余额:63.64</span>
            <span className="w-[89px]">费别:自费</span>
            <span>总</span>
          </p>
        </div>

        <div className="flex flex-1">
          <Sidebar />
          <main className="flex min-w-0 flex-1 flex-col">
            <OrderGrid />
            <div className="h-2 shrink-0 bg-linear-to-b from-[#c4dafb] to-[#7ea6df]" />
            <div role="tablist" className="flex h-8 shrink-0 border-b-2 border-[#c8dcfa] bg-linear-to-b from-[#e0ecff] to-[#b5d3ff] pt-0.5">
              {visitTabs.map(({ name, width }) => (
                <SlantTab key={name} name={name} width={width} active={tab === name} onClick={() => setTab(name)} />
              ))}
            </div>
            <section className="h-[92px] shrink-0 border-x-2 border-t border-[#7ba2dc] bg-linear-to-b from-[#e0ecff] to-[#acd0ff]">
              <div className="flex h-[31px] items-center pl-[89px]">
                <BlueButton className="h-6 w-[50px]">上一诊</BlueButton>
                <BlueButton className="h-6 w-[52px]" disabled>
                  下一诊
                </BlueButton>
                <BlueButton className="ml-[3px] h-6 w-[68px]">历史诊断</BlueButton>
                <label className="flex items-center gap-1.5 pt-1 text-black">
                  <input type="checkbox" className="size-4 appearance-none border border-black bg-white" />
                  初诊
                </label>
                <label className="ml-2 flex items-center gap-1 pt-1 text-black">
                  特殊病种:
                  <input className="h-[26px] w-40 border border-[#b3c9e8] bg-[#eeeeee]" />
                </label>
              </div>
              <div className="flex flex-col gap-[3px]">
                <label className="flex items-center">
                  <span className="w-14 shrink-0">既往史:</span>
                  <input className="h-[26px] w-full max-w-[1100px] border border-[#b3c9e8] bg-[#eeeeee]" />
                </label>
                <label className="flex items-center">
                  <span className="w-14 shrink-0">过敏史:</span>
                  <input
                    defaultValue="三代头孢菌素；青霉素类；牛奶"
                    className="h-[26px] w-full max-w-[1100px] border border-[#b3c9e8] bg-[#eeeeee] pb-1 pl-0.5 text-black"
                  />
                </label>
              </div>
            </section>
            <section className="h-[245px] shrink-0 border-2 border-[#20262e] bg-white">
              <DiagnosisTable
                title="中医诊断名称"
                rows={[
                  { kind: "疾病", text: "" },
                  { kind: "证候", text: "" },
                ]}
              />
            </section>
            <div className="h-1.5 shrink-0 bg-[#f0f0f0]" />
            <section className="relative flex-1 border-2 border-t border-[#20262e] bg-white">
              <DiagnosisTable
                title="西医诊断名称"
                rows={[
                  { kind: "主要", text: "常规一般性健康查体，其他限定人群的" },
                  { kind: "其它", text: "慢性病毒性肝炎，其他的" },
                  { kind: "其它", text: "隐性梅毒" },
                  { kind: "其它", text: "" },
                ]}
              />
              <span className="pointer-events-none absolute top-[49px] left-[142px] h-[75px] w-[190px] border-[5px] border-[#ff0000]" />
            </section>
            <div className="flex h-[35px] shrink-0 items-center gap-0.5 border-t-2 border-[#7ba2dc] bg-linear-to-b from-[#e0ecff] to-[#b5d3ff] pb-1 pl-0.5">
              {bottomActions.map(({ name, width, red }) => (
                <BlueButton key={name} className={clsx("h-7", width, red && "text-[#ff0000]")}>
                  {name}
                </BlueButton>
              ))}
            </div>
          </main>
          <ActionRail />
        </div>
      </div>

      <div className="flex h-7 shrink-0 items-center border-t-2 border-b-2 border-t-[#77808c] border-b-[#8fb4e8] bg-linear-to-b from-[#e0ecff] to-[#b5d3ff] pb-1 pl-[7px] whitespace-nowrap">
        <span className="w-[116px]">当前挂号信息:</span>
        <span className="w-9">初诊</span>
        <span className="w-[152px]">主治医师号</span>
        <span className="w-[71px]">挂号费:</span>
        <span className="w-[62px]">0</span>
        <span className="w-[59px]">诊察费:</span>
        <span className="w-[62px]">30</span>
        <span className="w-[70px]">挂号号:</span>
        <span className="w-[100px]">38689129</span>
        <span className="w-[85px]">接诊医生:</span>
        <span>邱晨</span>
      </div>
      <Taskbar />

      {dialogOpen && <ReportDialog onClose={() => setDialogOpen(false)} />}
      <button className="absolute right-16 bottom-[114px] z-30 flex size-[72px] items-center justify-center rounded-full border-2 border-[#4fe3ee] bg-linear-to-b from-[#52c8f2] via-[#1f93dd] to-[#1b62b8] font-['Open_Sans',sans-serif] text-xl font-extrabold text-white shadow-[0_0_6px_#7ff]">
        CDSS
      </button>
      <InputBar />
    </div>
  );
}
